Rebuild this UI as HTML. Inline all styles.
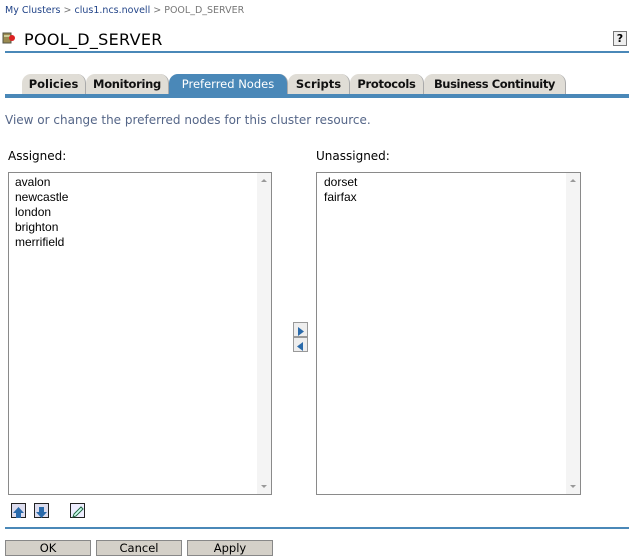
<!DOCTYPE html>
<html><head><style>
*{margin:0;padding:0;box-sizing:border-box}
body{width:633px;height:558px;background:#fff;font-family:"DejaVu Sans","Liberation Sans",sans-serif;position:relative;overflow:hidden}
.a{position:absolute}
.tab{position:absolute;top:74px;height:20px;background:#e0ddd6;border-radius:9px 9px 0 0;font-size:11.5px;font-weight:bold;color:#111;line-height:20px;text-align:center;border-right:1px solid #aaa;white-space:nowrap}
.box{position:absolute;border:1px solid #8a8a8a;background:#fff;font-family:"Liberation Sans",sans-serif;font-size:12px;line-height:15px;color:#000}
.sb{position:absolute;right:0;top:0;bottom:0;width:14px;background:#f4f4f4}
.sb:before{content:"";position:absolute;left:4px;top:6px;border:3px solid transparent;border-bottom:3px solid #999;border-top:0}
.sb:after{content:"";position:absolute;left:4px;bottom:6px;border:3px solid transparent;border-top:3px solid #999;border-bottom:0}
.btn{position:absolute;top:540px;height:16px;width:86px;background:#d4d0c8;border:1px solid #888;font-size:11.5px;text-align:center;line-height:14px;color:#000}
.ib{position:absolute;width:15px;height:15px;border:1px solid #222;background:#dde}
</style></head><body>
<div class="a" style="left:5px;top:5px;font-size:9.5px;color:#224488">My Clusters <span style="color:#777">&gt;</span> clus1.ncs.novell <span style="color:#777">&gt; POOL_D_SERVER</span></div>
<svg class="a" style="left:2px;top:31px" width="14" height="14"><rect x="1" y="2" width="8" height="10" fill="#9a8a50" stroke="#554"/><rect x="2" y="4" width="6" height="2" fill="#cc9"/><circle cx="10" cy="7" r="3" fill="#d22"/></svg>
<div class="a" style="left:24px;top:30px;font-size:16px;color:#000;letter-spacing:0.3px">POOL_D_SERVER</div>
<div class="a" style="left:613px;top:31px;width:14px;height:15px;border:1px solid #777;background:#eee;font-size:11px;font-weight:bold;text-align:center;line-height:13px">?</div>
<div class="a" style="left:5px;top:51px;width:624px;height:2px;background:#4a88b8"></div>
<div class="tab" style="left:22px;width:64px">Policies</div>
<div class="tab" style="left:86px;width:83px;letter-spacing:-0.3px">Monitoring</div>
<div class="tab" style="left:169px;width:119px;background:#4a88b8;color:#fff;font-weight:normal">Preferred Nodes</div>
<div class="tab" style="left:288px;width:62px">Scripts</div>
<div class="tab" style="left:350px;width:74px;letter-spacing:-0.3px">Protocols</div>
<div class="tab" style="left:424px;width:142px;letter-spacing:-0.4px">Business Continuity</div>
<div class="a" style="left:5px;top:94px;width:624px;height:4px;background:#4a88b8"></div>
<div class="a" style="left:5px;top:113px;font-size:12px;color:#556688">View or change the preferred nodes for this cluster resource.</div>
<div class="a" style="left:8px;top:149px;font-size:12px;color:#000">Assigned:</div>
<div class="a" style="left:316px;top:149px;font-size:12px;color:#000">Unassigned:</div>
<div class="box" style="left:8px;top:172px;width:264px;height:323px;padding:2px 6px">avalon<br>newcastle<br>london<br>brighton<br>merrifield<div class="sb"></div></div>
<div class="box" style="left:316px;top:172px;width:265px;height:323px;padding:2px 7px">dorset<br>fairfax<div class="sb"></div></div>
<div class="a" style="left:293px;top:322px;width:15px;height:15px;background:#eee;border:1px solid #999"><svg width="13" height="13"><polygon points="4,2 10,6.5 4,11" fill="#2a6aaa"/></svg></div>
<div class="a" style="left:293px;top:337px;width:15px;height:15px;background:#eee;border:1px solid #999"><svg width="13" height="13"><polygon points="9,2 3,6.5 9,11" fill="#2a6aaa"/></svg></div>
<div class="ib" style="left:11px;top:503px"><svg width="13" height="13"><polygon points="6.5,1 12,7 9,7 9,12 4,12 4,7 1,7" fill="#2a6aaa"/></svg></div>
<div class="ib" style="left:34px;top:503px"><svg width="13" height="13"><polygon points="6.5,12 12,6 9,6 9,1 4,1 4,6 1,6" fill="#2a6aaa"/></svg></div>
<div class="ib" style="left:70px;top:503px;background:#eef"><svg width="13" height="13"><path d="M2 11 L3 8 L10 1 L12 3 L5 10 Z" fill="#cfe" stroke="#264" stroke-width="1"/></svg></div>
<div class="a" style="left:5px;top:527px;width:624px;height:2px;background:#4a88b8"></div>
<div class="btn" style="left:5px">OK</div>
<div class="btn" style="left:96px">Cancel</div>
<div class="btn" style="left:187px">Apply</div>
</body></html>
